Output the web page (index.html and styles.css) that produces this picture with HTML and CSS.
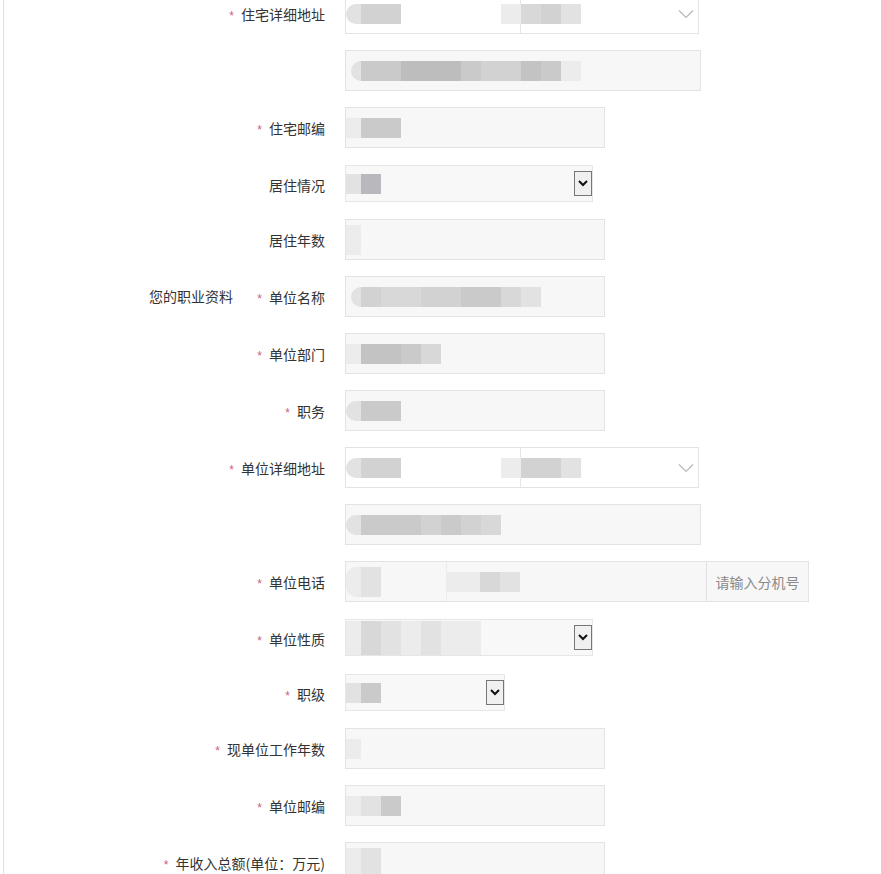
FILE: index.html
```html
<!DOCTYPE html>
<html lang="zh-CN">
<head>
<meta charset="utf-8">
<title>职业资料</title>
<link rel="stylesheet" href="styles.css">
</head>
<body>
<div class="page">
  <div class="form">
    <div class="row">
      <div class="section"></div>
      <div class="label"><span class="req">*</span>住宅详细地址</div>
      <div class="cascader w-wide">
        <div class="cas-left"><span class="mz"><i class="w15 m2 rl"></i><i class="w20 m4"></i><i class="w20 m4"></i><i class="w100"></i><i class="w20 m1"></i></span></div>
        <div class="cas-right"><span class="mz"><i class="w20 m3"></i><i class="w20 m4"></i><i class="w20 m2"></i></span>
          <svg class="chev" width="16" height="10" viewBox="0 0 16 10"><path d="M1 1.5 L8 8.5 L15 1.5" fill="none" stroke="#b8b8b8" stroke-width="1.2"/></svg>
        </div>
      </div>
    </div>

    <div class="row">
      <div class="section"></div>
      <div class="label"></div>
      <div class="input w-wider"><span class="mz"><i class="w5"></i><i class="w10 m2 rl"></i><i class="w20 m5"></i><i class="w20 m5"></i><i class="w60 m7"></i><i class="w20 m5"></i><i class="w20 m4"></i><i class="w20 m4"></i><i class="w20 m6"></i><i class="w20 m5"></i><i class="w20 m1"></i></span></div>
    </div>

    <div class="row">
      <div class="section"></div>
      <div class="label"><span class="req">*</span>住宅邮编</div>
      <div class="input w-mid"><span class="mz"><i class="w15 m1"></i><i class="w20 m5"></i><i class="w20 m5"></i></span></div>
    </div>

    <div class="row row-sel">
      <div class="section"></div>
      <div class="label">居住情况</div>
      <div class="select w-sel"><span class="mz"><i class="w15 m2"></i><i class="w20 m8"></i></span>
        <span class="arrow"><svg width="10" height="7" viewBox="0 0 10 7"><path d="M1 1 L5 5 L9 1" fill="none" stroke="#111" stroke-width="2"/></svg></span>
      </div>
    </div>

    <div class="row">
      <div class="section"></div>
      <div class="label">居住年数</div>
      <div class="input w-mid"><span class="mz"><i class="w15 m1 tall"></i></span></div>
    </div>

    <div class="row">
      <div class="section">您的职业资料</div>
      <div class="label"><span class="req">*</span>单位名称</div>
      <div class="input w-mid"><span class="mz"><i class="w5"></i><i class="w10 m2 rl"></i><i class="w20 m4"></i><i class="w20 m3"></i><i class="w20 m3"></i><i class="w20 m4"></i><i class="w20 m4"></i><i class="w20 m5"></i><i class="w20 m5"></i><i class="w20 m3"></i><i class="w20 m2"></i></span></div>
    </div>

    <div class="row">
      <div class="section"></div>
      <div class="label"><span class="req">*</span>单位部门</div>
      <div class="input w-mid"><span class="mz"><i class="w15 m1"></i><i class="w40 m6"></i><i class="w20 m5"></i><i class="w20 m3"></i></span></div>
    </div>

    <div class="row">
      <div class="section"></div>
      <div class="label"><span class="req">*</span>职务</div>
      <div class="input w-mid"><span class="mz"><i class="w15 m2 rl"></i><i class="w20 m5"></i><i class="w20 m5"></i></span></div>
    </div>

    <div class="row">
      <div class="section"></div>
      <div class="label"><span class="req">*</span>单位详细地址</div>
      <div class="cascader w-wide">
        <div class="cas-left"><span class="mz"><i class="w15 m2 rl"></i><i class="w20 m4"></i><i class="w20 m4"></i><i class="w100"></i><i class="w20 m1"></i></span></div>
        <div class="cas-right"><span class="mz"><i class="w20 m4"></i><i class="w20 m4"></i><i class="w20 m2"></i></span>
          <svg class="chev" width="16" height="10" viewBox="0 0 16 10"><path d="M1 1.5 L8 8.5 L15 1.5" fill="none" stroke="#b8b8b8" stroke-width="1.2"/></svg>
        </div>
      </div>
    </div>

    <div class="row">
      <div class="section"></div>
      <div class="label"></div>
      <div class="input w-wider"><span class="mz"><i class="w15 m2 rl"></i><i class="w20 m5"></i><i class="w20 m5"></i><i class="w20 m5"></i><i class="w20 m4"></i><i class="w20 m5"></i><i class="w20 m4"></i><i class="w20 m3"></i></span></div>
    </div>

    <div class="row">
      <div class="section"></div>
      <div class="label"><span class="req">*</span>单位电话</div>
      <div class="phone">
        <div class="seg seg-area"><span class="mz"><i class="w15 m1 tall rl"></i><i class="w20 m2 tall"></i></span></div>
        <div class="seg seg-num"><span class="mz"><i class="w13 m1"></i><i class="w20 m1"></i><i class="w20 m3"></i><i class="w20 m2"></i></span></div>
        <div class="addon">请输入分机号</div>
      </div>
    </div>

    <div class="row row-sel">
      <div class="section"></div>
      <div class="label"><span class="req">*</span>单位性质</div>
      <div class="select w-sel"><span class="mz"><i class="w15 m1 tall2"></i><i class="w20 m3 tall2"></i><i class="w20 m2 tall2"></i><i class="w20 m1 tall2"></i><i class="w20 m2 tall2"></i><i class="w20 m1 tall2"></i><i class="w20 m1 tall2"></i></span>
        <span class="arrow"><svg width="10" height="7" viewBox="0 0 10 7"><path d="M1 1 L5 5 L9 1" fill="none" stroke="#111" stroke-width="2"/></svg></span>
      </div>
    </div>

    <div class="row row-sel">
      <div class="section"></div>
      <div class="label"><span class="req">*</span>职级</div>
      <div class="select w-sel-s"><span class="mz"><i class="w15 m2"></i><i class="w20 m5"></i></span>
        <span class="arrow"><svg width="10" height="7" viewBox="0 0 10 7"><path d="M1 1 L5 5 L9 1" fill="none" stroke="#111" stroke-width="2"/></svg></span>
      </div>
    </div>

    <div class="row">
      <div class="section"></div>
      <div class="label"><span class="req">*</span>现单位工作年数</div>
      <div class="input w-mid"><span class="mz"><i class="w15 m1"></i></span></div>
    </div>

    <div class="row">
      <div class="section"></div>
      <div class="label"><span class="req">*</span>单位邮编</div>
      <div class="input w-mid"><span class="mz"><i class="w15 m1"></i><i class="w20 m2"></i><i class="w20 m5"></i></span></div>
    </div>

    <div class="row">
      <div class="section"></div>
      <div class="label"><span class="req">*</span>年收入总额(单位：万元)</div>
      <div class="input w-mid"><span class="mz"><i class="w15 m1 tall"></i><i class="w20 m2 tall"></i></span></div>
    </div>
  </div>
</div>
</body>
</html>
```

FILE: styles.css
```css
* { box-sizing: border-box; }

html, body {
  margin: 0;
  padding: 0;
  background: #ffffff;
}

body {
  font-family: "Noto Sans CJK SC", "Noto Sans", "Liberation Sans", sans-serif;
  font-size: 14px;
  color: #333333;
  height: 874px;
  overflow: hidden;
}

.page {
  display: flow-root;
  margin-left: 3px;
  border-left: 1px solid #e0e0e0;
  min-height: 874px;
}

.form {
  margin-top: -7px;
}

.row {
  display: grid;
  grid-template-columns: 231px 90px auto;
  height: 41px;
  margin-bottom: 16px;
  align-items: start;
}

.row-sel {
  height: 39px;
}

.section {
  height: 41px;
  line-height: 41px;
  text-align: right;
  padding-right: 2px;
  white-space: nowrap;
  color: #333333;
}

.label {
  display: flex;
  justify-content: flex-end;
  align-items: center;
  height: 41px;
  white-space: nowrap;
  color: #333333;
}

.req {
  color: #cf5b7d;
  font-family: "Liberation Sans", sans-serif;
  font-size: 12px;
  line-height: 12px;
  padding-top: 5px;
  margin-right: 7px;
}

.input,
.cascader,
.select,
.phone {
  margin-left: 20px;
}

.input {
  height: 41px;
  background: #f7f7f7;
  border: 1px solid #e3e3e3;
  display: flex;
  align-items: center;
}

.w-mid { width: 260px; }
.w-wider { width: 356px; }
.w-wide { width: 354px; }
.w-sel { width: 248px; }
.w-sel-s { width: 160px; }

.cascader {
  height: 41px;
  background: #ffffff;
  border: 1px solid #e3e3e3;
  display: flex;
}

.cas-left {
  width: 175px;
  border-right: 1px solid #e6e6e6;
  display: flex;
  align-items: center;
}

.cas-right {
  flex: 1;
  display: flex;
  align-items: center;
}

.chev {
  margin-left: auto;
  margin-right: 4px;
}

.select {
  height: 37px;
  margin-top: 1px;
  background: #f8f8f8;
  border: 1px solid #e6e6e6;
  display: flex;
  align-items: center;
}

.arrow {
  margin-left: auto;
  width: 18px;
  height: 25px;
  border: 1px solid #767676;
  background: #f0f0f0;
  display: flex;
  align-items: center;
  justify-content: center;
}

.phone {
  width: 464px;
  height: 41px;
  display: flex;
  background: #f7f7f7;
  border: 1px solid #e3e3e3;
}

.seg {
  height: 100%;
  display: flex;
  align-items: center;
}

.seg-area {
  width: 101px;
  border-right: 1px solid #ececec;
}

.seg-num {
  flex: 1;
}

.addon {
  width: 102px;
  border-left: 1px solid #e2e2e2;
  display: flex;
  align-items: center;
  justify-content: center;
  color: #8a8a8a;
  white-space: nowrap;
}

/* blurred (mosaic) field values */
.mz {
  display: flex;
  align-items: center;
}

.mz i {
  display: block;
  height: 20px;
}

.mz i.tall { height: 30px; }
.mz i.tall2 { height: 34px; }
.mz i.rl { border-radius: 10px 0 0 10px; }

.w5 { width: 5px; }
.w10 { width: 10px; }
.w13 { width: 13px; }
.w15 { width: 15px; }
.w20 { width: 20px; }
.w40 { width: 40px; }
.w60 { width: 60px; }
.w100 { width: 100px; }

.m1 { background: #ececec; }
.m2 { background: #e2e2e2; }
.m3 { background: #d9d8d8; }
.m4 { background: #d2d2d2; }
.m5 { background: #cacaca; }
.m6 { background: #c3c3c3; }
.m7 { background: #bdbdbd; }
.m8 { background: #b8b8bd; }
```
